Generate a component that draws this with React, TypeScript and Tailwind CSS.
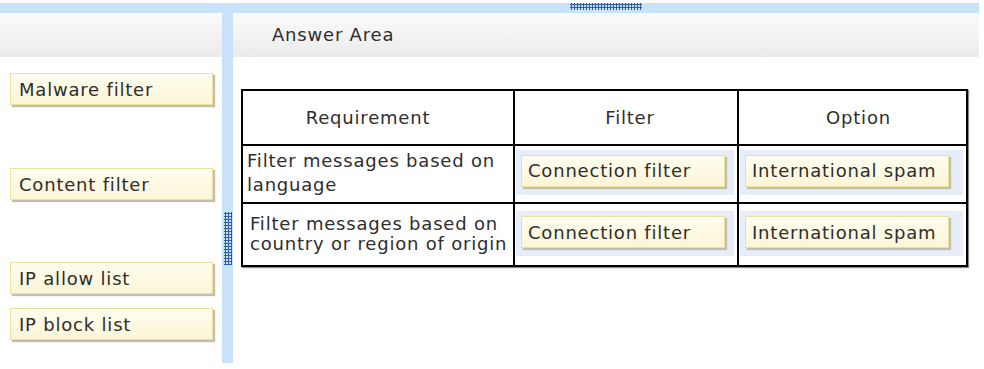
const font = "font-['DejaVu_Sans','Verdana',sans-serif]";

const Tile = ({ label, className = '' }: { label: string; className?: string }) => (
  <div
    className={`flex items-center h-[32px] bg-[linear-gradient(#fffdf0,#fcf5d6)] border border-[#ece09a] shadow-[2px_2px_1px_#c3bfae] text-[#2e2e2e] whitespace-nowrap ${className}`}
  >
    {label}
  </div>
);

const DropSlot = ({ label, offset }: { label: string; offset: string }) => (
  <div className={`ml-[1px] mr-[3px] pt-[5px] pb-[8px] pl-[5px] bg-[#e7eef9] ${offset}`}>
    <Tile label={label} className="w-[204px] pl-[6px]" />
  </div>
);

const Grip = ({ className = '' }: { className?: string }) => (
  <div
    className={`bg-[radial-gradient(circle,#2f5ea6_1px,transparent_1.3px)] bg-[length:3px_3px] ${className}`}
  />
);

const rows = [
  {
    lines: ['Filter messages based on', 'language'],
    cell: 'pl-[4px] leading-[24px] pb-[3px]',
    height: 'h-[58px]',
    offset: 'mb-[4px]',
  },
  {
    lines: ['Filter messages based on', 'country or region of origin'],
    cell: 'pl-[7px] leading-[20px] pb-[2px]',
    height: 'h-[63px]',
    offset: 'mb-[2px]',
  },
];

export default function App() {
  return (
    <div
      className={`w-[984px] h-[369px] bg-white flex flex-col pt-[3px] pr-[5px] pb-[6px] text-[18px] tracking-[0.8px] ${font}`}
    >
      {/* top resize bar */}
      <div className="h-[10px] flex bg-[#c7e2f9]">
        <div className="w-[233px]" />
        <div className="flex-1 flex justify-center">
          <Grip className="w-[72px] h-[7px]" />
        </div>
      </div>

      <div className="flex-1 flex">
        {/* choices */}
        <div className="w-[222px] flex flex-col">
          <div className="h-[44px] bg-[linear-gradient(#fbfbfb,#ebebeb)]" />
          <div className="flex flex-col pl-[10px] pr-[9px] pt-[16px]">
            <Tile label="Malware filter" className="pl-[8px]" />
            <Tile label="Content filter" className="pl-[8px] mt-[63px]" />
            <Tile label="IP allow list" className="pl-[8px] mt-[62px]" />
            <Tile label="IP block list" className="pl-[8px] mt-[14px]" />
          </div>
        </div>

        {/* splitter */}
        <div className="w-[11px] bg-[#c7e2f9] flex flex-col pt-[199px]">
          <Grip className="ml-[2px] w-[8px] h-[53px]" />
        </div>

        {/* answer area */}
        <div className="flex-1 flex flex-col">
          <div className="h-[44px] flex items-center pl-[39px] pb-[2px] bg-[linear-gradient(#fbfbfb,#ebebeb)] text-[#2e2e2e]">
            Answer Area
          </div>
          <div className="flex-1 pt-[32px] pl-[8px]">
            <table className="table-fixed border-collapse w-[725px] text-[#2e2e2e] shadow-[1px_1px_1px_#8a8a8a]">
              <colgroup>
                <col className="w-[272px]" />
                <col className="w-[224px]" />
                <col className="w-[229px]" />
              </colgroup>
              <thead>
                <tr className="h-[55px]">
                  <th className="border-2 border-black font-normal text-center pr-[20px]">Requirement</th>
                  <th className="border-2 border-black font-normal text-center pl-[8px]">Filter</th>
                  <th className="border-2 border-black font-normal text-center pl-[12px]">Option</th>
                </tr>
              </thead>
              <tbody>
                {rows.map((r, i) => (
                  <tr key={i} className={r.height}>
                    <td className={`border-2 border-black pr-0 whitespace-nowrap ${r.cell}`}>
                      {r.lines[0]}
                      <br />
                      {r.lines[1]}
                    </td>
                    <td className="border-2 border-black">
                      <DropSlot label="Connection filter" offset={r.offset} />
                    </td>
                    <td className="border-2 border-black">
                      <DropSlot label="International spam" offset={r.offset} />
                    </td>
                  </tr>
                ))}
              </tbody>
            </table>
          </div>
        </div>
      </div>
    </div>
  );
}
